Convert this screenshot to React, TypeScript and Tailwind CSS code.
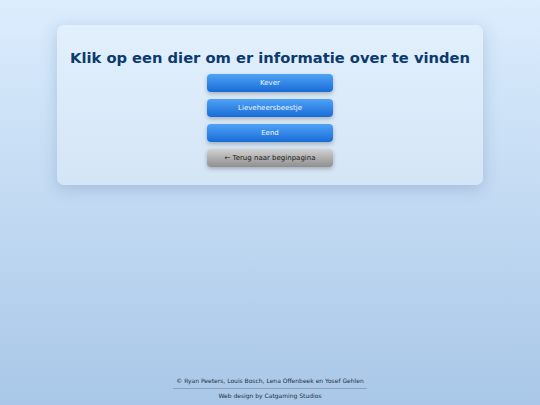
import React from "react";

const btn =
  "w-[126px] h-[18px] rounded-[4px] flex items-center justify-center leading-none text-[7px] shadow-[0_2px_4px_rgba(0,0,0,0.25)]";
const blue = "bg-gradient-to-b from-[#4fa2f6] to-[#166cd6] text-[#f2f7ff]";

export default function App() {
  return (
    <div
      className="w-[540px] h-[405px] flex flex-col items-center bg-gradient-to-b from-[#dcedfd] to-[#a9c7e8] overflow-hidden"
      style={{ fontFamily: '"DejaVu Sans", Verdana, sans-serif' }}
    >
      <div className="mt-[25px] w-[426px] h-[160px] rounded-[7px] bg-gradient-to-b from-[#e2f0fd] to-[#d4e5f6] shadow-[0_4px_16px_rgba(60,100,150,0.25)] flex flex-col items-center">
        <h1 className="mt-[22px] text-[14.7px] font-bold text-[#0c3a6e] leading-[22px] whitespace-nowrap">
          Klik op een dier om er informatie over te vinden
        </h1>
        <div className="mt-[5px] flex flex-col gap-[7px]">
          <button className={`${btn} ${blue}`}>Kever</button>
          <button className={`${btn} ${blue}`}>Lieveheersbeestje</button>
          <button className={`${btn} ${blue}`}>Eend</button>
          <button className={`${btn} bg-gradient-to-b from-[#d2d2d2] to-[#8f8f8f] text-[#222]`}>← Terug naar beginpagina</button>
        </div>
      </div>
      <div className="mt-auto mb-[5px] flex flex-col items-center text-[6px] text-[#1f2f45]">
        <div className="pb-[3px] px-[3px] border-b border-[#8aa2bd] leading-[8px]">
          © Ryan Peeters, Louis Bosch, Lena Offenbeek en Yosef Gehlen
        </div>
        <div className="mt-[3px] leading-[8px]">Web design by Catgaming Studios</div>
      </div>
    </div>
  );
}
